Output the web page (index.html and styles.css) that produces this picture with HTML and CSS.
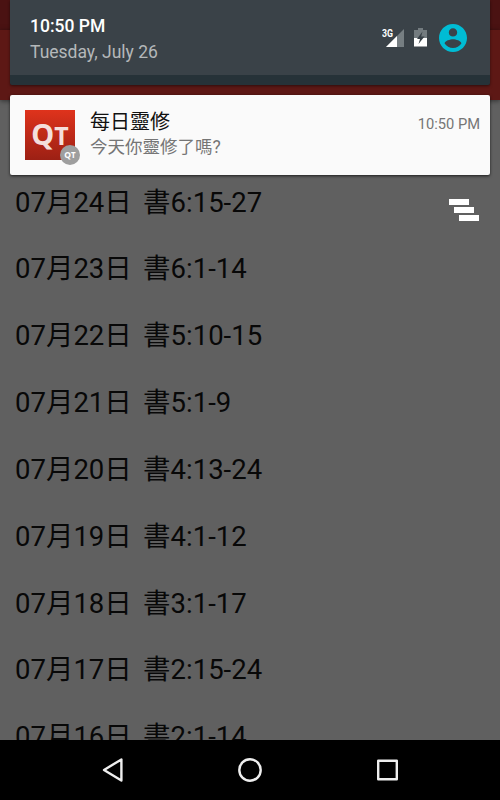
FILE: index.html
```html
<!DOCTYPE html>
<html lang="zh-Hant">
<head>
  <meta charset="utf-8">
  <title>每日靈修</title>
  <link rel="stylesheet" href="styles.css">
</head>
<body>

<div class="screen">
  <div class="status-bar"></div>
  <div class="app-bar"></div>

  <ul class="list">
    <li>07月24日&nbsp; 書6:15-27</li>
    <li>07月23日&nbsp; 書6:1-14</li>
    <li>07月22日&nbsp; 書5:10-15</li>
    <li>07月21日&nbsp; 書5:1-9</li>
    <li>07月20日&nbsp; 書4:13-24</li>
    <li>07月19日&nbsp; 書4:1-12</li>
    <li>07月18日&nbsp; 書3:1-17</li>
    <li>07月17日&nbsp; 書2:15-24</li>
    <li>07月16日&nbsp; 書2:1-14</li>
  </ul>

  <!-- Notification shade -->
  <div class="shade">
    <div class="shade-header">
      <div class="clock">
        <div class="time">10:50 PM</div>
        <div class="date">Tuesday, July 26</div>
      </div>
      <div class="status-icons">
        <svg class="signal" width="24" height="20" viewBox="0 0 24 20">
          <path d="M22 1V19H4z" fill="#767e82"/>
          <path d="M15 8V19H4z" fill="#fff"/>
          <text x="0" y="9.3" textLength="11" lengthAdjust="spacingAndGlyphs">3G</text>
        </svg>
        <svg class="battery" width="13" height="19" viewBox="0 0 13 19">
          <path d="M4 0H9V2H13V10H0V2H4z" fill="#737b7f"/>
          <path d="M0 10H13V18.5H0z" fill="#fff"/>
          <path d="M8.5 3.5L3 11H6L4.5 16L10.5 8.5H7.2z" fill="#374047"/>
        </svg>
        <svg class="user" width="28" height="28" viewBox="2 2 20 20">
          <path fill="#00bcd4" d="M12 2C6.48 2 2 6.48 2 12s4.48 10 10 10 10-4.48 10-10S17.52 2 12 2zm0 3c1.66 0 3 1.34 3 3s-1.34 3-3 3-3-1.34-3-3 1.34-3 3-3zm0 14.2c-2.5 0-4.71-1.28-6-3.22.03-1.99 4-3.08 6-3.08 1.99 0 5.97 1.09 6 3.08-1.29 1.94-3.5 3.22-6 3.22z"/>
        </svg>
      </div>
    </div>

    <div class="notification">
      <div class="app-icon">
        <span class="logo">Q<small>T</small></span>
        <span class="badge">Q<small>T</small></span>
      </div>
      <div class="message">
        <div class="title">每日靈修</div>
        <div class="text">今天你靈修了嗎?</div>
      </div>
      <div class="when">10:50 PM</div>
    </div>

    <svg class="clear-all" width="30" height="22" viewBox="0 0 30 22" fill="#fff">
      <rect x="0" y="0" width="20" height="6"/>
      <rect x="5" y="8" width="20" height="6"/>
      <rect x="10" y="16" width="20" height="6"/>
    </svg>
  </div>

  <div class="nav-bar">
    <svg width="26" height="26" viewBox="0 0 26 26">
      <path d="M21.4 2.4V23.6L4 13z"/>
    </svg>
    <svg width="26" height="26" viewBox="0 0 26 26">
      <circle cx="13" cy="13" r="10.7"/>
    </svg>
    <svg width="26" height="26" viewBox="0 0 26 26">
      <rect x="4.2" y="3.7" width="18.6" height="18.6"/>
    </svg>
  </div>
</div>

</body>
</html>
```
FILE: styles.css
```css
body {
  margin: 0;
  font-family: Roboto, "Noto Sans CJK TC", sans-serif;
}

.screen {
  position: relative;
  display: flex;
  flex-direction: column;
  width: 500px;
  height: 800px;
  overflow: hidden;
  background: #606060;
}

.status-bar {
  flex: none;
  height: 30px;
  background: #4a1212;
}

.app-bar {
  flex: none;
  height: 70px;
  background: #5d1815;
  box-shadow: 0 1px 5px rgba(0,0,0,0.5);
}

.list {
  flex: 1;
  min-height: 0;
  overflow: hidden;
  margin: 0;
  padding: 69.5px 15px 0;
  list-style: none;
  font-size: 27.5px;
  line-height: 66.85px;
  word-spacing: -1.2px;
  color: #080808;
}

.list li {
  height: 66.85px;
  white-space: nowrap;
}

.shade {
  position: absolute;
  top: 0;
  left: 10px;
  width: 480px;
}

.shade-header {
  box-sizing: border-box;
  display: flex;
  justify-content: space-between;
  height: 85px;
  padding: 0 23.5px 0 20px;
  border-bottom: 10px solid #263238;
  border-radius: 0 0 2px 2px;
  background: #3a4248;
  box-shadow: 0 1px 3px rgba(0,0,0,0.5);
}

.clock {
  padding-top: 14px;
}

.time {
  font-size: 17.5px;
  font-weight: 500;
  line-height: 24px;
  color: #fff;
}

.date {
  font-size: 17.5px;
  line-height: 28px;
  color: #b4b8ba;
}

.status-icons {
  display: flex;
  align-items: center;
}

.signal text {
  font-size: 10.5px;
  font-weight: 700;
  fill: #fff;
}

.battery {
  margin: 0 12px 0 8px;
}

.notification {
  box-sizing: border-box;
  display: flex;
  height: 80px;
  margin-top: 10px;
  padding: 15px 10px 0 15px;
  border-radius: 2px;
  background: #fafafa;
  box-shadow: 0 1px 3px rgba(0,0,0,0.7);
}

.app-icon {
  position: relative;
  width: 50px;
  height: 50px;
  margin-right: 15px;
  background: linear-gradient(#df331c, #9c2014);
  font-family: "Noto Sans", sans-serif;
  text-align: center;
}

.logo {
  display: block;
  font-size: 29px;
  font-weight: 700;
  line-height: 47px;
  color: #f4dfdc;
}

.logo small {
  font-size: 25px;
}

.badge {
  position: absolute;
  right: -5px;
  bottom: -5px;
  width: 20px;
  height: 20px;
  border-radius: 50%;
  background: #9e9e9e;
  color: #fff;
  font-size: 8.5px;
  font-weight: 700;
  line-height: 20px;
}

.badge small {
  font-size: 8px;
}

.message {
  flex: 1;
}

.title {
  font-size: 20px;
  line-height: 25px;
  color: #111;
}

.text {
  font-size: 17.5px;
  line-height: 25px;
  color: #757575;
}

.when {
  font-size: 14.7px;
  line-height: 28px;
  color: #757575;
}

.clear-all {
  display: block;
  margin: 24px 0 0 439px;
}

.nav-bar {
  position: relative;
  flex: none;
  display: flex;
  justify-content: center;
  align-items: center;
  gap: 111px;
  height: 60px;
  background: #000;
}

.nav-bar svg {
  fill: none;
  stroke: #eee;
  stroke-width: 2.4;
  stroke-linejoin: round;
}
```
